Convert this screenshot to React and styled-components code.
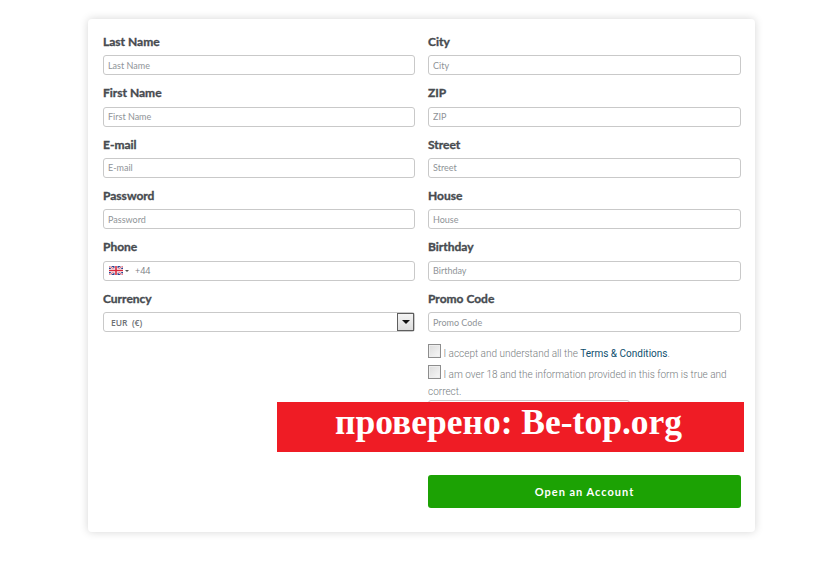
import React from 'react';
import styled, { createGlobalStyle } from 'styled-components';

const GlobalStyle = createGlobalStyle`
  html, body {
    margin: 0;
    background: #fff;
    font-family: Lato, "Liberation Sans", sans-serif;
  }
`;

const Page = styled.div`
  box-sizing: border-box;
  min-height: 100vh;
  padding: 19px 0 0 88px;
`;

const Card = styled.form`
  position: relative;
  box-sizing: border-box;
  width: 667px;
  height: 513px;
  padding: 16.2px 14px 24px 15px;
  background: #fff;
  border-radius: 4px;
  box-shadow: 0 0 9px rgba(0, 0, 0, 0.17);
  display: grid;
  grid-template-columns: 312px 313px;
  column-gap: 13px;
`;

const Column = styled.div`
  display: flex;
  flex-direction: column;
`;

const Field = styled.div`
  height: 51.4px;
  display: flex;
  flex-direction: column;
  flex: none;
`;

const Label = styled.label`
  height: 20.4px;
  margin-top: -0.4px;
  line-height: 14px;
  font-size: 12px;
  font-weight: 700;
  color: #474b50;
  -webkit-text-stroke: 0.35px #474b50;
`;

const TextInput = styled.input`
  box-sizing: border-box;
  width: 100%;
  height: 20px;
  padding: 0 4px;
  border: 1px solid #c9c9c9;
  border-radius: 3px;
  outline: none;
  font-family: Lato, sans-serif;
  font-size: 9px;
  color: #8a8f94;
  &::placeholder {
    color: #8f9498;
    opacity: 1;
  }
`;

const PhoneBox = styled.div`
  box-sizing: border-box;
  height: 20px;
  padding: 0 5px;
  border: 1px solid #c9c9c9;
  border-radius: 3px;
  display: flex;
  align-items: center;
  font-family: "Open Sans", sans-serif;
  font-size: 9px;
  color: #7b8086;
`;

const Caret = styled.span`
  width: 0;
  height: 0;
  margin: 0 6px 0 2px;
  border-left: 2px solid transparent;
  border-right: 2px solid transparent;
  border-top: 2px solid #555;
`;

const SelectBox = styled.div`
  box-sizing: border-box;
  height: 20px;
  padding: 0 0 0 7px;
  border: 1px solid #c9c9c9;
  border-radius: 3px;
  display: flex;
  align-items: center;
  justify-content: space-between;
  font-family: "Open Sans", sans-serif;
  font-size: 8.5px;
  font-weight: 600;
  color: #6c7075;
  white-space: pre;
`;

const SelectArrow = styled.span`
  box-sizing: border-box;
  width: 17px;
  height: 18px;
  background: linear-gradient(#f4f4f4, #dcdcdc);
  border: 1px solid #5e5e5e;
  display: flex;
  align-items: center;
  justify-content: center;
  &::after {
    content: '';
    border-left: 4px solid transparent;
    border-right: 4px solid transparent;
    border-top: 4px solid #111;
  }
`;

const Terms = styled.div`
  margin-top: 1px;
  font-family: Roboto, sans-serif;
  font-size: 10px;
  font-weight: 300;
  line-height: 17.5px;
  color: #777c80;
  flex: none;
`;

const TermsRow = styled.div`
  margin-bottom: 3.5px;
  &:last-child {
    margin-bottom: 0;
  }
`;

const Check = styled.span`
  display: inline-block;
  box-sizing: border-box;
  width: 13px;
  height: 14px;
  margin: -4px 0 0 0;
  vertical-align: -1px;
  background: linear-gradient(135deg, #dcdcdc, #f7f7f7);
  border: 1px solid #8d8d8d;
  box-shadow: inset 0 0 0 1px #eee;
`;

const TermsLink = styled.a`
  color: #0f4f6e;
  font-weight: 400;
`;

const Captcha = styled.div`
  box-sizing: border-box;
  width: 202px;
  height: 40px;
  margin-top: -1px;
  flex: none;
  border: 1px solid #c9c9c9;
  border-radius: 3px;
`;

const SubmitButton = styled.button`
  height: 33px;
  margin-top: 35px;
  flex: none;
  border: none;
  border-radius: 3px;
  background: #1ca204;
  color: #fff;
  font-family: Lato, sans-serif;
  font-size: 11px;
  font-weight: 700;
  letter-spacing: 1px;
`;

const Stamp = styled.div`
  position: absolute;
  left: 189px;
  top: 383px;
  box-sizing: border-box;
  width: 467px;
  height: 50px;
  padding-right: 4px;
  background: #ef1c25;
  color: #fff;
  font-family: "Liberation Serif", serif;
  font-size: 35.5px;
  font-weight: 700;
  line-height: 41px;
  text-align: center;
  white-space: nowrap;
`;

const leftFields = ['Last Name', 'First Name', 'E-mail', 'Password'];
const rightFields = ['City', 'ZIP', 'Street', 'House', 'Birthday', 'Promo Code'];

const UkFlag = () => (
  <svg width="14" height="9" viewBox="0 0 14 9">
    <rect width="14" height="9" fill="#2b3f8c" />
    <path d="M0 0L14 9M14 0L0 9" stroke="#fff" strokeWidth="2" />
    <path d="M0 0L14 9M14 0L0 9" stroke="#d8283c" strokeWidth="0.7" />
    <path d="M7 0V9M0 4.5H14" stroke="#fff" strokeWidth="3" />
    <path d="M7 0V9M0 4.5H14" stroke="#d8283c" strokeWidth="1.6" />
  </svg>
);

const TextField = ({ name }) => (
  <Field>
    <Label>{name}</Label>
    <TextInput placeholder={name} />
  </Field>
);

export default function App() {
  return (
    <Page>
      <GlobalStyle />
      <Card>
        <Column>
          {leftFields.map((name) => (
            <TextField name={name} key={name} />
          ))}
          <Field>
            <Label>Phone</Label>
            <PhoneBox>
              <UkFlag />
              <Caret />
              +44
            </PhoneBox>
          </Field>
          <Field>
            <Label>Currency</Label>
            <SelectBox>
              {'EUR  (€)'}
              <SelectArrow />
            </SelectBox>
          </Field>
        </Column>
        <Column>
          {rightFields.map((name) => (
            <TextField name={name} key={name} />
          ))}
          <Terms>
            <TermsRow>
              <Check /> I accept and understand all the <TermsLink>Terms &amp; Conditions</TermsLink>.
            </TermsRow>
            <TermsRow>
              <Check /> I am over 18 and the information provided in this form is true and correct.
            </TermsRow>
          </Terms>
          <Captcha />
          <SubmitButton type="button">Open an Account</SubmitButton>
        </Column>
        <Stamp>проверено: Be-top.org</Stamp>
      </Card>
    </Page>
  );
}
